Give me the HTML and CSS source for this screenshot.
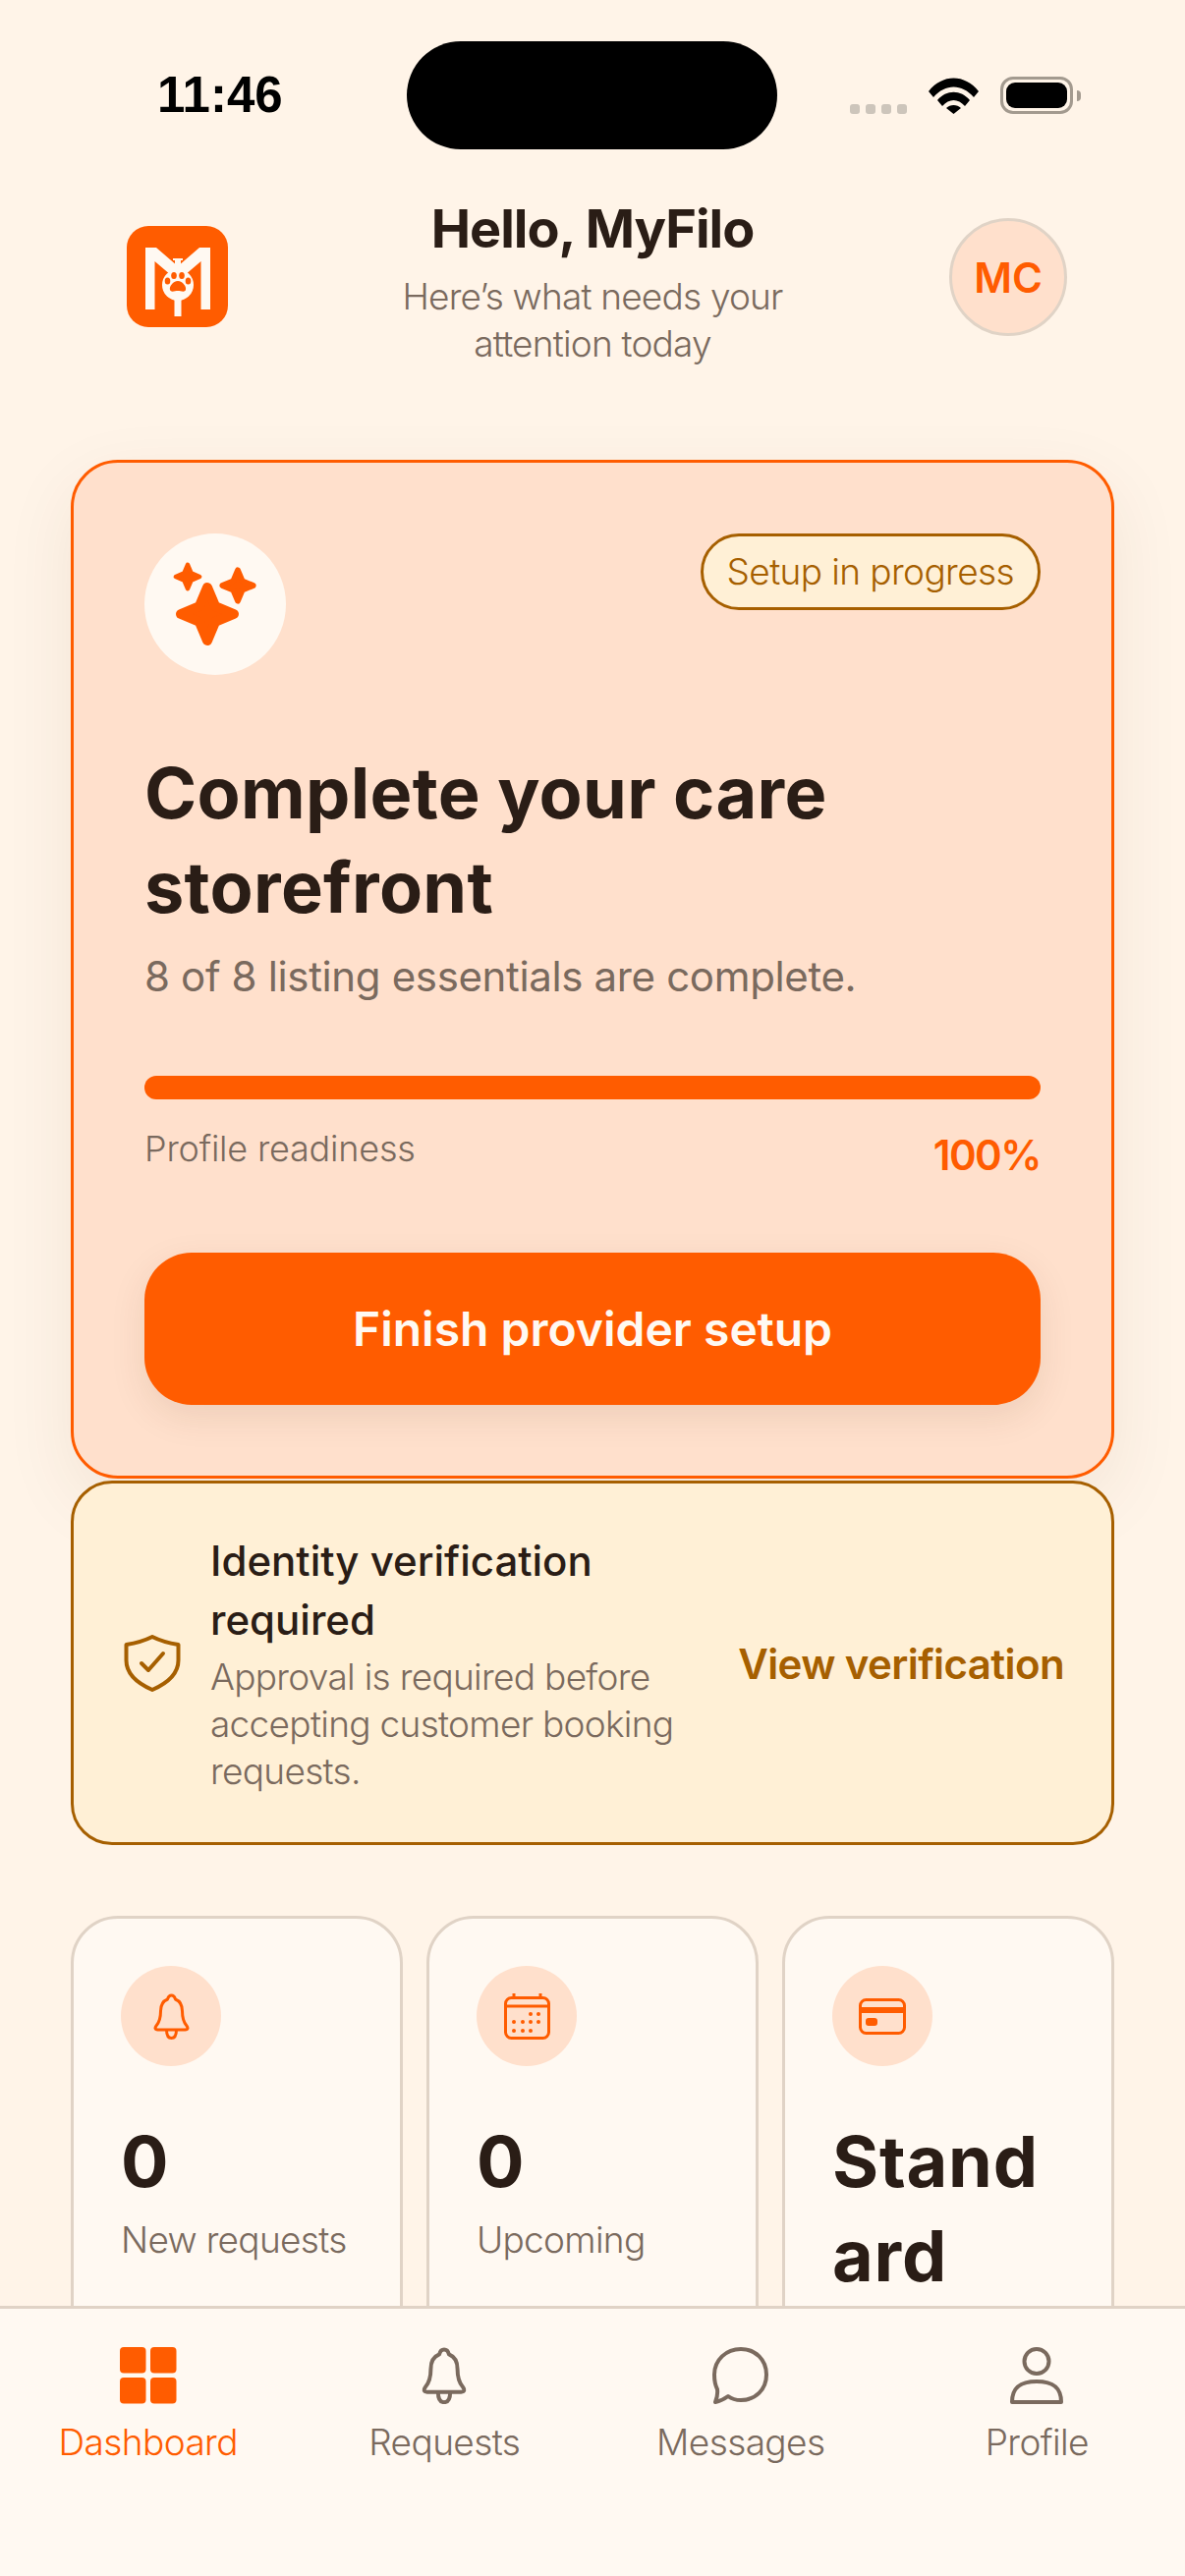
FILE: index.html
```html
<!DOCTYPE html>
<html lang="en">
<head>
    <meta charset="UTF-8">
    <meta name="viewport" content="width=device-width, initial-scale=1.0">
    <title>Dashboard</title>
    <link rel="stylesheet" href="styles.css">
</head>
<body>
    <div class="phone">
        <div class="status-bar">
            <span class="time">11:46</span>
            <div class="island"></div>
            <div class="status-icons">
                <div class="signal"><i></i><i></i><i></i><i></i></div>
                <svg class="wifi" viewBox="0 0 51 37">
                    <path d="M0 14 C14 -4 37 -4 51 14 L46 20 C34 6 17 6 5 20 Z"/>
                    <path d="M9 23 C18 12 33 12 42 23 L37 29 C30 21 21 21 14 29 Z"/>
                    <path d="M18 31 C22 27 29 27 33 31 L25.500 37 Z"/>
                </svg>
                <div class="battery"><div class="battery-fill"></div></div>
                <div class="battery-cap"></div>
            </div>
        </div>

        <div class="content">
            <header class="header">
                <div class="logo-box">
                    <svg class="logo" viewBox="0 0 103 103">
                        <rect width="103" height="103" rx="22" fill="#ff5c00"/>
                        <path fill="#fff9f2" d="M19 22 H30 L52 41 L74 22 H85 V85 H75.500 V36 L52 56 L28.500 36 V85 H19 Z"/>
                        <rect x="49" y="33" width="6" height="14" fill="#fff9f2"/>
                        <rect x="47" y="33" width="10" height="2" fill="#fff9f2"/>
                        <rect x="48.500" y="70" width="7" height="22" fill="#fff9f2"/>
                        <circle cx="52" cy="60" r="16" fill="#fff9f2"/>
                        <g fill="#ff5c00">
                            <ellipse cx="41.500" cy="56" rx="2.800" ry="3.600"/>
                            <ellipse cx="48" cy="50.500" rx="2.800" ry="3.600"/>
                            <ellipse cx="56" cy="50.500" rx="2.800" ry="3.600"/>
                            <ellipse cx="62.500" cy="56" rx="2.800" ry="3.600"/>
                            <path d="M52 56 C57 56 61 62 60 65 C59 68 55 66 52 66 C49 66 45 68 44 65 C43 62 47 56 52 56 Z"/>
                        </g>
                    </svg>
                </div>
                <div class="greeting">
                    <h1>Hello, MyFilo</h1>
                    <p>Here’s what needs your attention today</p>
                </div>
                <div class="avatar">MC</div>
            </header>

            <section class="setup-card">
                <div class="setup-top">
                    <div class="sparkle-circle">
                        <svg class="sparkle" viewBox="0 0 144 144">
                            <path d="M0 -27 L8 -8 L27 0 L8 8 L0 27 L-8 8 L-27 0 L-8 -8 Z" transform="translate(64 82)"/>
                            <path d="M0 -27 L8 -8 L27 0 L8 8 L0 27 L-8 8 L-27 0 L-8 -8 Z" transform="translate(44 44) scale(.45)"/>
                            <path d="M0 -27 L8 -8 L27 0 L8 8 L0 27 L-8 8 L-27 0 L-8 -8 Z" transform="translate(95 53) scale(.58)"/>
                        </svg>
                    </div>
                    <span class="badge">Setup in progress</span>
                </div>
                <h2>Complete your care storefront</h2>
                <p class="setup-sub">8 of 8 listing essentials are complete.</p>
                <div class="progress"><div class="progress-fill"></div></div>
                <div class="progress-row">
                    <span class="progress-label">Profile readiness</span>
                    <span class="progress-value">100%</span>
                </div>
                <button class="setup-btn">Finish provider setup</button>
            </section>

            <section class="verify-card">
                <svg class="shield" viewBox="0 0 58 58">
                    <path d="M29 2 C36 5.500 46 8.500 55.500 10 V26 C55.500 39 45 49 29 56 C13 49 2.500 39 2.500 26 V10 C12 8.500 22 5.500 29 2 Z"/>
                    <path d="M18 29 L25 36 L40 19"/>
                </svg>
                <div class="verify-text">
                    <h3>Identity verification required</h3>
                    <p>Approval is required before accepting customer booking requests.</p>
                </div>
                <a class="verify-link">View verification</a>
            </section>

            <section class="stats">
                <div class="stat-card">
                    <div class="stat-icon">
                        <svg class="icon-bell" viewBox="0 0 38 47">
                            <path d="M19 2 C16.500 2 15.500 4 15 6 C10 8 8 12 8 18 C8 25 7 29 3.500 33 C2 35 2 37 5 37 H33 C36 37 36 35 34.500 33 C31 29 30 25 30 18 C30 12 28 8 23 6 C22.500 4 21.500 2 19 2 Z"/>
                            <path d="M14 37 C14 43 16 45.500 19 45.500 C22 45.500 24 43 24 37"/>
                        </svg>
                    </div>
                    <div class="stat-value">0</div>
                    <div class="stat-label">New requests</div>
                </div>
                <div class="stat-card">
                    <div class="stat-icon">
                        <svg class="icon-calendar" viewBox="0 0 47 47">
                            <rect x="1.500" y="4.500" width="44" height="41" rx="6"/>
                            <path d="M2 13 H45 M10 0 V5 M37 0 V5"/>
                            <g class="dots">
                                <circle cx="27" cy="21" r="2"/><circle cx="35" cy="21" r="2"/>
                                <circle cx="10" cy="29" r="2"/><circle cx="19" cy="29" r="2"/><circle cx="27" cy="29" r="2"/><circle cx="35" cy="29" r="2"/>
                                <circle cx="10" cy="38" r="2"/><circle cx="19" cy="38" r="2"/><circle cx="27" cy="38" r="2"/>
                            </g>
                        </svg>
                    </div>
                    <div class="stat-value">0</div>
                    <div class="stat-label">Upcoming</div>
                </div>
                <div class="stat-card">
                    <div class="stat-icon">
                        <svg class="icon-card" viewBox="0 0 48 37">
                            <rect x="1.500" y="1.500" width="45" height="34" rx="6"/>
                            <g class="dots">
                                <rect x="2" y="9" width="44" height="6"/>
                                <rect x="7" y="20" width="12" height="8" rx="3"/>
                            </g>
                        </svg>
                    </div>
                    <div class="stat-value word">Stand<br>ard</div>
                </div>
            </section>
        </div>

        <nav class="bottom-nav">
            <div class="nav-item active">
                <svg class="nav-icon" viewBox="0 0 58 58">
                    <g class="dots">
                        <rect x="0" y="0" width="26.500" height="26.500" rx="4"/>
                        <rect x="31" y="0" width="26.500" height="26.500" rx="4"/>
                        <rect x="0" y="31" width="26.500" height="26.500" rx="4"/>
                        <rect x="31" y="31" width="26.500" height="26.500" rx="4"/>
                    </g>
                </svg>
                <span>Dashboard</span>
            </div>
            <div class="nav-item">
                <svg class="nav-icon" viewBox="0 0 38 47">
                    <path class="thin" d="M19 2 C16.500 2 15.500 4 15 6 C10 8 8 12 8 18 C8 25 7 29 3.500 33 C2 35 2 37 5 37 H33 C36 37 36 35 34.500 33 C31 29 30 25 30 18 C30 12 28 8 23 6 C22.500 4 21.500 2 19 2 Z"/>
                    <path class="thin" d="M14 37 C14 43 16 45.500 19 45.500 C22 45.500 24 43 24 37"/>
                </svg>
                <span>Requests</span>
            </div>
            <div class="nav-item">
                <svg class="nav-icon" viewBox="0 0 58 58">
                    <path d="M29 2 C44 2 55 13 55 28 C55 43 44 54 29 54 C24 54 20 53 16 50 C12 53 8 55 3 56 C5 51 5.500 47 5 43 C3 39 2 34 2 28 C2 13 14 2 29 2 Z"/>
                </svg>
                <span>Messages</span>
            </div>
            <div class="nav-item">
                <svg class="nav-icon" viewBox="0 0 58 58">
                    <circle cx="29" cy="14.500" r="12.500"/>
                    <path d="M4 56 C4 40 14 35 29 35 C44 35 54 40 54 56 Z"/>
                </svg>
                <span>Profile</span>
            </div>
        </nav>
    </div>
</body>
</html>
```

FILE: styles.css
```css
* {
    box-sizing: border-box;
    margin: 0;
    padding: 0;
}

body {
    font-family: Inter, "Open Sans", sans-serif;
    background: #fff4e8;
    color: #2a1d16;
}

.phone {
    position: relative;
    display: flex;
    flex-direction: column;
    width: 1206px;
    height: 2622px;
    overflow: hidden;
}

/* status bar */
.status-bar {
    display: flex;
    justify-content: space-between;
    flex: none;
    height: 195px;
    padding: 73px 106px 0 160px;
}

.time {
    font-family: "Liberation Sans", sans-serif;
    font-weight: 700;
    font-size: 51px;
    line-height: 48px;
    color: #000;
}

.island {
    position: absolute;
    top: 42px;
    left: 414px;
    width: 377px;
    height: 110px;
    border-radius: 55px;
    background: #000;
}

.status-icons {
    display: flex;
    align-items: flex-end;
    height: 43px;
}

.signal {
    display: flex;
    gap: 6px;
    margin-right: 22px;
}

.signal i {
    width: 10px;
    height: 10px;
    border-radius: 3px;
    background: #cdc5bb;
}

.wifi {
    width: 51px;
    height: 37px;
    margin-right: 22px;
}

.battery {
    width: 74px;
    height: 38px;
    padding: 3px;
    border: 3px solid #a39a8f;
    border-radius: 13px;
}

.battery-fill {
    width: 100%;
    height: 100%;
    border-radius: 9px;
    background: #000;
}

.battery-cap {
    width: 4px;
    height: 11px;
    margin: 0 0 13px 4px;
    border-radius: 0 4px 4px 0;
    background: #a39a8f;
}

/* header */
.content {
    flex: 1;
    min-height: 0;
    overflow: hidden;
    padding: 0 72px;
}

.header {
    display: flex;
    align-items: center;
    justify-content: space-between;
    height: 174px;
    padding: 0 48px;
    margin-bottom: 99px;
}

.logo-box {
    display: flex;
    justify-content: center;
    width: 120px;
    margin-bottom: 2px;
}

.logo {
    width: 103px;
    height: 103px;
}

.greeting {
    width: 480px;
    padding-top: 7px;
    text-align: center;
}

.greeting h1 {
    font-size: 54px;
    font-weight: 700;
    line-height: 72px;
    letter-spacing: -1px;
}

.greeting p {
    margin-top: 9px;
    font-size: 37px;
    font-weight: 300;
    line-height: 48px;
    letter-spacing: -0.8px;
    color: #7a6a5e;
}

.avatar {
    display: flex;
    align-items: center;
    justify-content: center;
    width: 120px;
    height: 120px;
    border: 3px solid #e0d3c6;
    border-radius: 50%;
    background: #ffe0cc;
    color: #ff5c00;
    font-size: 42px;
    font-weight: 600;
}

/* setup card */
.setup-card {
    padding: 72px;
    border: 3px solid #ff5c00;
    border-radius: 48px;
    background: #ffe0cc;
    box-shadow: 0 24px 72px rgba(90, 50, 20, 0.08);
}

.setup-top {
    display: flex;
    justify-content: space-between;
    align-items: flex-start;
}

.sparkle-circle {
    width: 144px;
    height: 144px;
    border-radius: 50%;
    background: #fff9f2;
}

.sparkle {
    display: block;
    width: 144px;
    height: 144px;
}

.sparkle path {
    fill: #ff5c00;
    stroke: #ff5c00;
    stroke-width: 10;
    stroke-linejoin: round;
}

.badge {
    padding: 12px 24px;
    border: 3px solid #a65f00;
    border-radius: 39px;
    background: #fff0d6;
    color: #a65f00;
    font-size: 37px;
    font-weight: 300;
    line-height: 48px;
    letter-spacing: -0.6px;
}

.setup-card h2 {
    margin-top: 72px;
    font-size: 72px;
    font-weight: 700;
    line-height: 96px;
    letter-spacing: 0.3px;
}

.setup-sub {
    margin-top: 13px;
    font-size: 42px;
    line-height: 60px;
    letter-spacing: -0.35px;
    color: #7a6a5e;
}

.progress {
    margin-top: 71px;
    height: 24px;
    border-radius: 12px;
    background: #ff5c00;
}

.progress-fill {
    height: 100%;
}

.progress-row {
    display: flex;
    justify-content: space-between;
    align-items: flex-start;
    margin-top: 23px;
}

.progress-label {
    font-size: 36px;
    font-weight: 300;
    line-height: 54px;
    letter-spacing: -0.2px;
    color: #7a6a5e;
}

.progress-value {
    margin-top: 4px;
    color: #ff5c00;
    font-size: 42px;
    font-weight: 600;
    line-height: 60px;
    letter-spacing: -1.5px;
}

.setup-btn {
    display: block;
    width: 100%;
    height: 155px;
    margin-top: 69px;
    border: none;
    border-radius: 48px;
    background: #ff5c00;
    color: #fff9f2;
    font-family: inherit;
    font-size: 48px;
    font-weight: 600;
    box-shadow: 0 12px 36px rgba(90, 50, 20, 0.1);
}

/* verification banner */
.verify-card {
    display: flex;
    align-items: center;
    gap: 30px;
    margin-top: 2px;
    padding: 49px 48px 48px 51px;
    border: 3px solid #a65f00;
    border-radius: 42px;
    background: #fff0d6;
}

.shield {
    flex: none;
    width: 58px;
    height: 58px;
    fill: none;
    stroke: #a65f00;
    stroke-width: 4;
    stroke-linecap: round;
    stroke-linejoin: round;
}

.verify-text {
    flex: 1;
    min-width: 0;
}

.verify-text h3 {
    font-size: 42px;
    font-weight: 500;
    line-height: 60px;
}

.verify-text p {
    margin-top: 4px;
    font-size: 37px;
    font-weight: 300;
    line-height: 48px;
    letter-spacing: -0.7px;
    color: #7a6a5e;
}

.verify-link {
    flex: none;
    color: #a65f00;
    font-size: 42px;
    font-weight: 600;
    letter-spacing: -0.6px;
}

/* stat cards */
.stats {
    display: grid;
    grid-template-columns: repeat(3, 1fr);
    gap: 24px;
    margin-top: 72px;
}

.stat-card {
    height: 500px;
    padding: 48px;
    border: 3px solid #e0d3c6;
    border-radius: 48px;
    background: #fff9f2;
}

.stat-icon {
    display: flex;
    align-items: center;
    justify-content: center;
    width: 102px;
    height: 102px;
    border-radius: 50%;
    background: #ffe0cc;
}

.stat-icon svg {
    fill: none;
    stroke: #ff5c00;
    stroke-width: 3;
    stroke-linejoin: round;
}

.stat-icon .dots {
    fill: #ff5c00;
    stroke: none;
}

.icon-bell,
.icon-calendar {
    width: 47px;
    height: 47px;
}

.icon-card {
    width: 48px;
    height: 37px;
}

.stat-value {
    margin-top: 49px;
    font-size: 72px;
    font-weight: 700;
    line-height: 96px;
}

.stat-value.word {
    letter-spacing: 0.8px;
}

.stat-label {
    margin-top: 5px;
    font-size: 37px;
    font-weight: 300;
    line-height: 54px;
    letter-spacing: -0.7px;
    color: #7a6a5e;
}

/* bottom nav */
.bottom-nav {
    position: relative;
    display: grid;
    grid-template-columns: repeat(4, 1fr);
    flex: none;
    height: 275px;
    padding-top: 39px;
    border-top: 3px solid #e0d3c6;
    background: #fff9f2;
}

.nav-item {
    display: flex;
    flex-direction: column;
    align-items: center;
    gap: 12px;
    color: #7a6a5e;
    font-size: 37px;
    font-weight: 300;
    line-height: 54px;
    letter-spacing: -0.6px;
}

.nav-icon {
    width: 58px;
    height: 58px;
    fill: none;
    stroke: #7a6a5e;
    stroke-width: 4;
    stroke-linejoin: round;
}

.nav-icon .thin {
    stroke-width: 3.2;
}

.nav-icon .dots {
    fill: #ff5c00;
    stroke: none;
}

.nav-item.active {
    color: #ff5c00;
}
```
